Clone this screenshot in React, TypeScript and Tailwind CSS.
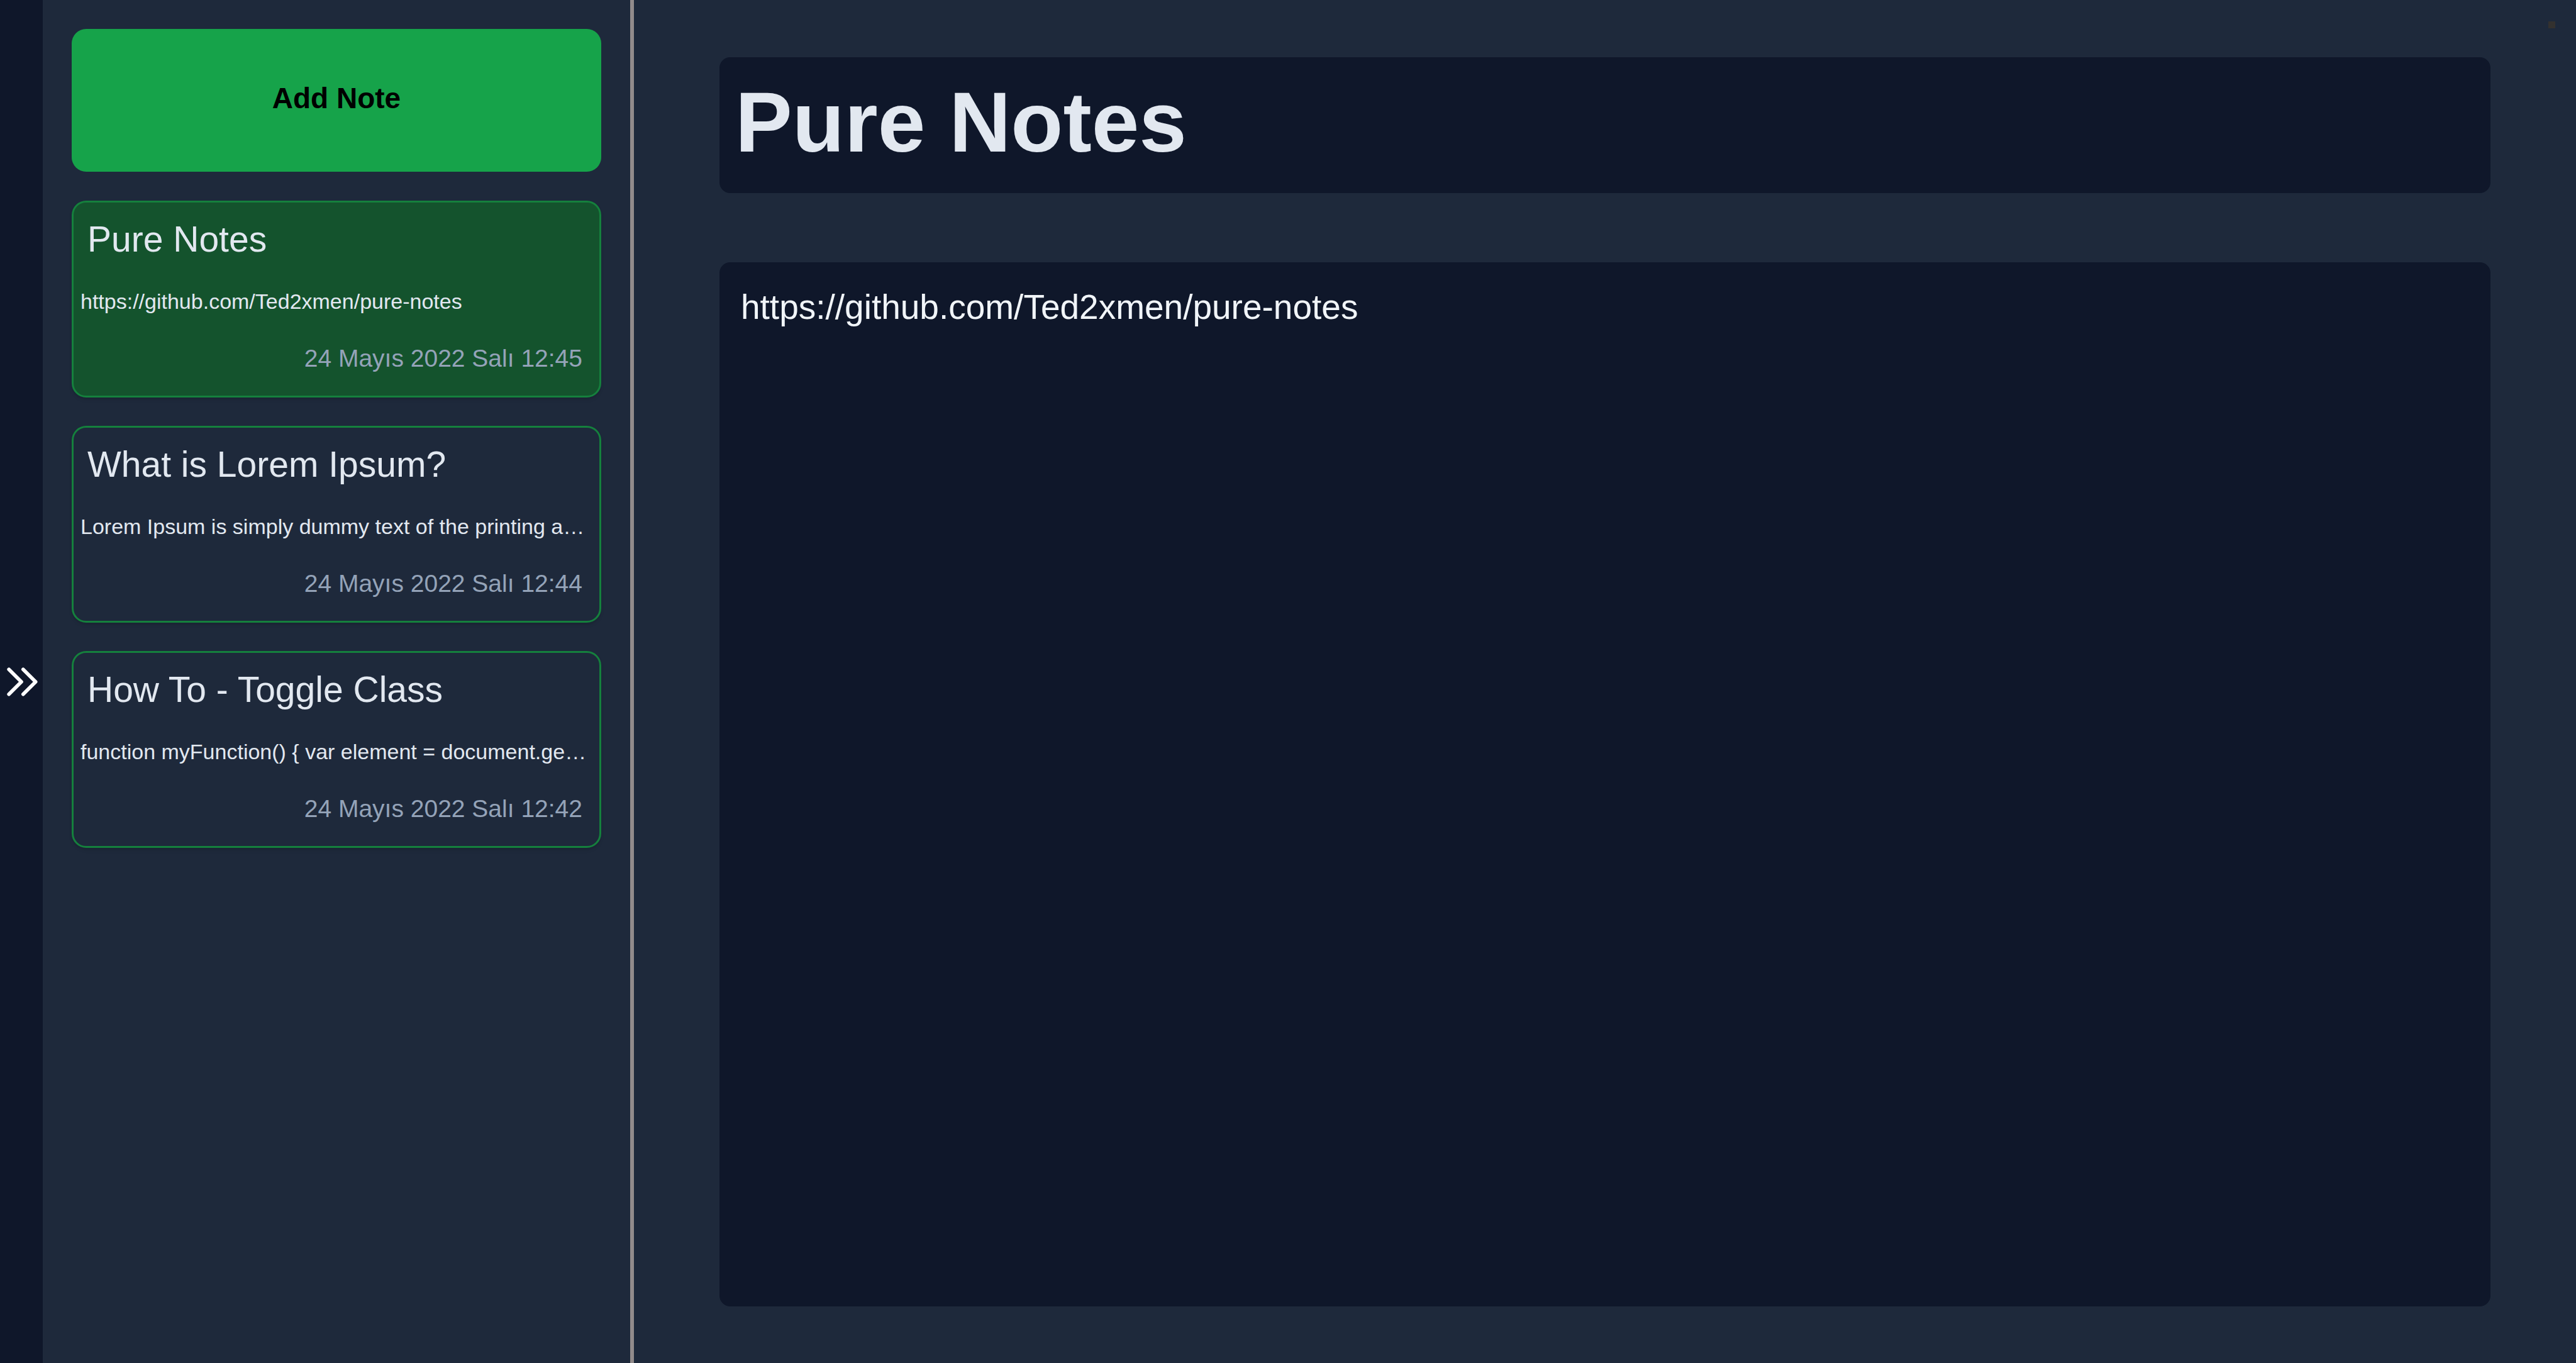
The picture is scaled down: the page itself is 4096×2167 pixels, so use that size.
import { useState } from "react";

type Note = {
  id: number;
  title: string;
  body: string;
  date: string;
};

const initialNotes: Note[] = [
  {
    id: 1,
    title: "Pure Notes",
    body: "https://github.com/Ted2xmen/pure-notes",
    date: "24 Mayıs 2022 Salı 12:45",
  },
  {
    id: 2,
    title: "What is Lorem Ipsum?",
    body: "Lorem Ipsum is simply dummy text of the printing and typesetting industry.",
    date: "24 Mayıs 2022 Salı 12:44",
  },
  {
    id: 3,
    title: "How To - Toggle Class",
    body: "function myFunction() { var element = document.getElementById(\"myDIV\"); }",
    date: "24 Mayıs 2022 Salı 12:42",
  },
];

function ChevronDoubleRight() {
  return (
    <svg
      className="size-[68px]"
      viewBox="0 0 24 24"
      fill="none"
      stroke="currentColor"
      strokeWidth={2}
      strokeLinecap="round"
      strokeLinejoin="round"
      aria-hidden="true"
    >
      <path d="M13 5l7 7-7 7M5 5l7 7-7 7" />
    </svg>
  );
}

function NoteCard({ note, active, onSelect }: { note: Note; active: boolean; onSelect: () => void }) {
  return (
    <li>
      <button
        type="button"
        onClick={onSelect}
        aria-pressed={active}
        className={
          "flex w-full flex-col rounded-[23px] border-3 border-[#15803d] pt-[18px] pb-[31px] text-left shadow-md " +
          (active ? "bg-[#14532d]" : "bg-[#1e293b]")
        }
      >
        <span className="px-[22px] text-[57px] leading-[80px] text-[#e2e8f0]">{note.title}</span>
        <span className="mt-9 w-full pr-4 pl-[11px] text-[34px] leading-[46px] text-[#e2e8f0]">
          <span className="block truncate">{note.body}</span>
        </span>
        <span className="mt-10 w-full px-[27px] text-right text-[39px] leading-[56px] text-[#94a3b8]">
          {note.date}
        </span>
      </button>
    </li>
  );
}

export default function App() {
  const [notes, setNotes] = useState(initialNotes);
  const [activeId, setActiveId] = useState(1);
  const active = notes.find((n) => n.id === activeId) ?? notes[0];

  const update = (patch: Partial<Note>) =>
    setNotes(notes.map((n) => (n.id === active.id ? { ...n, ...patch } : n)));

  const addNote = () => {
    const id = Math.max(...notes.map((n) => n.id)) + 1;
    setNotes([{ id, title: "", body: "", date: active.date }, ...notes]);
    setActiveId(id);
  };

  return (
    <div className="flex min-h-screen bg-[#1e293b] font-['Liberation_Sans',Arial,sans-serif]">
      <button
        type="button"
        aria-label="Toggle sidebar"
        className="flex w-[68px] shrink-0 items-center justify-center bg-[#0f172a] text-white"
      >
        <ChevronDoubleRight />
      </button>

      <aside className="w-[940px] shrink-0 border-r-6 border-[#918b8b] p-[46px]">
        <button
          type="button"
          onClick={addNote}
          className="h-[227px] w-full rounded-[23px] bg-[#16a34a] pb-[6px] text-[46px] font-bold text-black"
        >
          Add Note
        </button>
        <ul className="mt-[46px] flex flex-col gap-[45px]">
          {notes.map((note) => (
            <NoteCard
              key={note.id}
              note={note}
              active={note.id === active.id}
              onSelect={() => setActiveId(note.id)}
            />
          ))}
        </ul>
      </aside>

      <main className="relative flex min-w-0 flex-1 flex-col gap-[110px] px-[136px] pt-[91px] pb-[90px]">
        <span className="absolute top-[34px] right-[33px] size-[11px] bg-[#33312f]" />
        <input
          type="text"
          aria-label="Note title"
          value={active.title}
          onChange={(e) => update({ title: e.target.value })}
          className="h-[216px] w-full rounded-[17px] bg-[#0f172a] px-[25px] pb-[11px] text-[136px] font-bold text-[#e2e8f0] outline-none"
        />
        <textarea
          aria-label="Note text"
          value={active.body}
          spellCheck={false}
          onChange={(e) => update({ body: e.target.value })}
          className="w-full flex-1 resize-none rounded-[17px] bg-[#0f172a] px-[34px] py-[31px] text-[55px] leading-[80px] text-[#f1f5f9] outline-none"
        />
      </main>
    </div>
  );
}
